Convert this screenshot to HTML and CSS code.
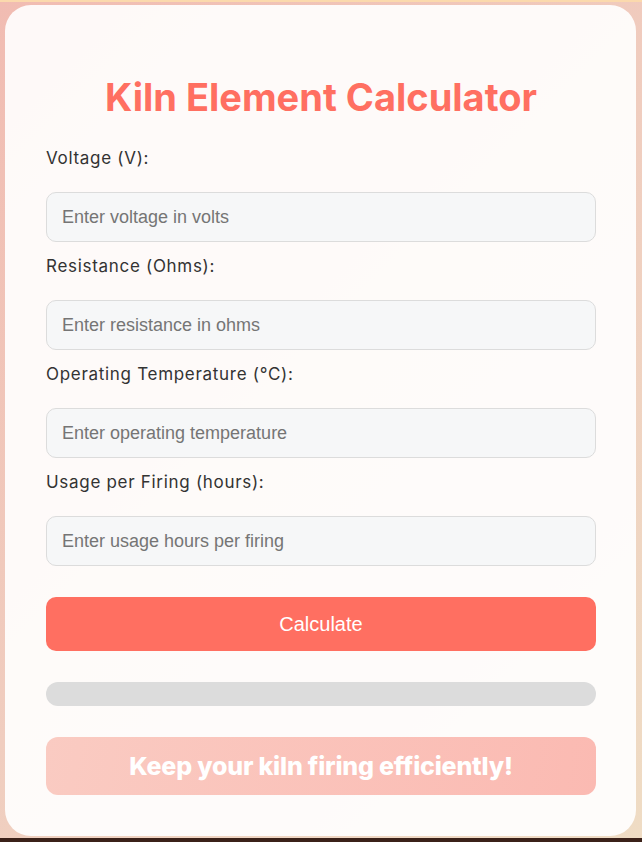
FILE: index.html
```html
<!DOCTYPE html>
<html lang="en">
<head>
  <meta charset="UTF-8" />
  <meta name="viewport" content="width=device-width, initial-scale=1.0"/>
  <title>Kiln Element Calculator</title>
  <link rel="stylesheet" href="styles.css">
</head>
<body>

<div class="container">
  <h1>Kiln Element Calculator</h1>

  <label for="voltage">Voltage (V):</label>
  <input type="number" id="voltage" placeholder="Enter voltage in volts">

  <label for="resistance">Resistance (Ohms):</label>
  <input type="number" id="resistance" placeholder="Enter resistance in ohms">

  <label for="temperature">Operating Temperature (°C):</label>
  <input type="number" id="temperature" placeholder="Enter operating temperature">

  <label for="usage">Usage per Firing (hours):</label>
  <input type="number" id="usage" placeholder="Enter usage hours per firing">

  <button class="btn">Calculate</button>

  <div class="progress"><div class="progress-fill"></div></div>

  <div class="banner">Keep your kiln firing efficiently!</div>
</div>

</body>
</html>
```

FILE: styles.css
```css
* {
  margin: 0;
  padding: 0;
  box-sizing: border-box;
}

html {
  background: #3b2119;
}

body {
  font-family: Inter, "Noto Sans", sans-serif;
  background: linear-gradient(135deg, #f1bcb2 0%, #f0cdbf 50%, #efdcc4 100%);
  border-top: 2px solid #fbd9ad;
  padding: 3px 6px 2px 5px;
  height: 838px;
}

.container {
  background: rgba(255, 255, 255, 0.91);
  border-radius: 26px;
  padding: 41px 40px 41px 41px;
  height: 831px;
}

h1 {
  color: #ff6f61;
  font-size: 38px;
  font-weight: 700;
  text-align: center;
  line-height: 54px;
  margin: 24px 0 22px;
}

label {
  display: block;
  color: #333;
  font-size: 17px;
  letter-spacing: 0.7px;
  line-height: 24px;
  margin-bottom: 22px;
}

input {
  display: block;
  width: 100%;
  height: 50px;
  padding: 0 15px;
  border: 1px solid #dcdcdc;
  border-radius: 10px;
  background: #f6f7f8;
  font-family: "Liberation Sans", Arial, sans-serif;
  font-size: 18px;
  color: #333;
  margin-bottom: 12px;
}

input::placeholder {
  color: #757575;
}

.btn {
  display: block;
  width: 100%;
  height: 54px;
  margin-top: 31px;
  background: #ff6f61;
  border: none;
  border-radius: 10px;
  color: white;
  font-family: "Liberation Sans", Arial, sans-serif;
  font-size: 20px;
  cursor: pointer;
}

.progress {
  margin-top: 31px;
  height: 24px;
  background: #dcdcdc;
  border-radius: 12px;
  overflow: hidden;
}

.progress-fill {
  width: 0;
  height: 100%;
  background: #ff6f61;
}

.banner {
  margin-top: 31px;
  height: 58px;
  border-radius: 12px;
  background: linear-gradient(100deg, #facbc2, #fbbab2);
  color: white;
  font-size: 25px;
  font-weight: 800;
  display: flex;
  align-items: center;
  justify-content: center;
  letter-spacing: -0.2px;
}
```
